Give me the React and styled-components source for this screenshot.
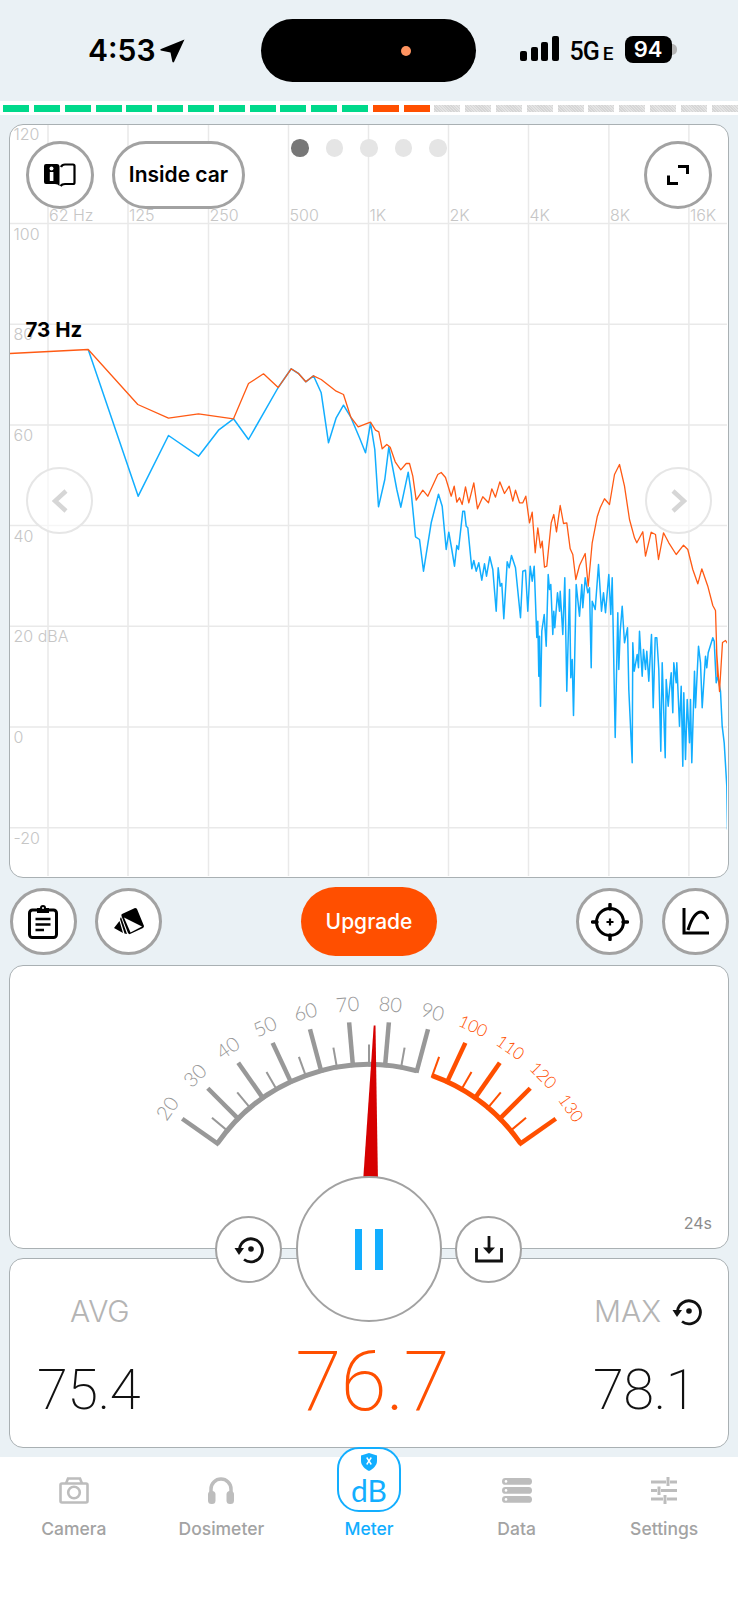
import React from 'react';
import styled, { createGlobalStyle } from 'styled-components';

const ORANGE = '#ff4f00';
const BLUE = '#12aeff';
const RING = '#a2a2a2';

const GlobalStyle = createGlobalStyle`
  html, body {
    margin: 0;
    padding: 0;
    background: #eaf1f5;
  }
  * {
    box-sizing: border-box;
  }
`;

const Screen = styled.div`
  position: relative;
  width: 738px;
  height: 1600px;
  overflow: hidden;
  display: flex;
  flex-direction: column;
  background: #eaf1f5;
  font-family: Inter, "Liberation Sans", sans-serif;
`;

/* status bar */
const StatusBar = styled.div`
  height: 101px;
  display: flex;
  flex-shrink: 0;
`;

const StatusLeft = styled.div`
  width: 261px;
  padding: 34px 0 0 88px;
  display: flex;
  align-items: flex-start;
  gap: 4px;
`;

const Clock = styled.span`
  font-size: 30px;
  line-height: 32px;
  font-weight: 600;
  color: #000;
`;

const Island = styled.div`
  width: 215px;
  height: 63px;
  margin-top: 19px;
  padding-left: 140px;
  border-radius: 32px;
  background: #000;
  display: flex;
  align-items: center;
`;

const IslandDot = styled.span`
  width: 10px;
  height: 10px;
  border-radius: 50%;
  background: #ff9460;
`;

const StatusRight = styled.div`
  padding: 36px 0 0 44px;
  display: flex;
  align-items: flex-start;
`;

const Signal = styled.div`
  display: flex;
  align-items: flex-end;
  gap: 3.5px;
  height: 25px;
  margin-right: 11px;
`;

const SignalBar = styled.span`
  width: 7px;
  height: ${p => p.$h}px;
  border-radius: 2px;
  background: #000;
`;

const Network = styled.span`
  font-family: Roboto, Inter, sans-serif;
  font-size: 25px;
  line-height: 26px;
  font-weight: 500;
  letter-spacing: -1px;
  color: #000;
  margin: 3px 12px 0 0;
  width: 43px;
  white-space: nowrap;
  small {
    font-size: 19px;
    margin-left: 4px;
    letter-spacing: 0;
  }
`;

const Battery = styled.div`
  position: relative;
  width: 47px;
  height: 27px;
  border-radius: 8px;
  background: #000;
  color: #fff;
  font-size: 22px;
  line-height: 27px;
  font-weight: 600;
  text-align: center;
  &::after {
    content: "";
    position: absolute;
    left: 47px;
    top: 8px;
    width: 5px;
    height: 11px;
    border-radius: 0 5px 5px 0;
    background: #b4b4b4;
  }
`;

/* level strip */
const LevelStrip = styled.div`
  height: 14px;
  flex-shrink: 0;
  padding: 4px 0 0 3.3px;
  background: #fff;
  display: flex;
  gap: 4.8px;
  overflow: hidden;
`;

const LevelCell = styled.span`
  width: 26px;
  height: 6.5px;
  flex-shrink: 0;
  background: ${p => p.$color};
`;

/* cards */
const Card = styled.div`
  position: relative;
  width: 720px;
  height: ${p => p.$h}px;
  margin: ${p => p.$top}px 9px 0;
  flex-shrink: 0;
  border: 1.5px solid #a9b0b3;
  border-radius: 14px;
  background: #fff;
`;

const Drawing = styled.svg`
  display: block;
  border-radius: 12px;
`;

const AxisText = styled.text`
  font-family: Inter, sans-serif;
  font-size: 16px;
  font-weight: 300;
  fill: #c6c6c6;
`;

const ReadoutText = styled.text`
  font-family: Inter, sans-serif;
  font-size: 20.5px;
  font-weight: 700;
  fill: #000;
`;

const DialText = styled.text`
  font-family: Lato, Inter, sans-serif;
  font-size: ${p => (p.$hot ? 17 : 20)}px;
  font-weight: 300;
  fill: ${p => (p.$hot ? ORANGE : '#989898')};
  text-anchor: middle;
  dominant-baseline: central;
`;

const RoundButton = styled.button`
  width: ${p => p.$size || 68}px;
  height: ${p => p.$size || 68}px;
  padding: 0;
  flex-shrink: 0;
  border: ${p => p.$ring || 3}px solid ${RING};
  border-radius: 50%;
  background: #fff;
  display: flex;
  align-items: center;
  justify-content: center;
`;

const ChartTopBar = styled.div`
  position: absolute;
  left: 16px;
  right: 16px;
  top: 15.5px;
  display: flex;
  align-items: flex-start;
  gap: 18px;
`;

const PillButton = styled.button`
  width: 133px;
  height: 68px;
  padding: 0;
  border: 3px solid ${RING};
  border-radius: 34px;
  background: #fff;
  font-family: Inter, sans-serif;
  font-size: 21px;
  font-weight: 600;
  color: #000;
`;

const PageDots = styled.div`
  position: absolute;
  left: 281px;
  top: 14px;
  display: flex;
  gap: 17px;
`;

const PageDot = styled.span`
  width: 17.5px;
  height: 17.5px;
  border-radius: 50%;
  background: ${p => (p.$on ? '#777' : '#e5e5e5')};
`;

const Spacer = styled.div`
  flex: 1;
`;

const PagerRow = styled.div`
  position: absolute;
  left: 16px;
  right: 16px;
  top: 342px;
  display: flex;
  justify-content: space-between;
`;

const PagerButton = styled.button`
  width: 67px;
  height: 67px;
  padding: 0;
  border: 2px solid #e6e6e6;
  border-radius: 50%;
  background: rgba(255, 255, 255, 0.6);
  display: flex;
  align-items: center;
  justify-content: center;
`;

/* tool row */
const ToolRow = styled.div`
  height: 87px;
  flex-shrink: 0;
  padding: 0 9.5px;
  display: grid;
  grid-template-columns: 1fr auto 1fr;
  align-items: center;
`;

const ToolGroup = styled.div`
  display: flex;
  gap: 18.5px;
  justify-content: ${p => (p.$end ? 'flex-end' : 'flex-start')};
`;

const UpgradeButton = styled.button`
  width: 136px;
  height: 69px;
  border: none;
  border-radius: 35px;
  background: ${ORANGE};
  color: #fff;
  font-family: Inter, sans-serif;
  font-size: 21px;
  font-weight: 500;
`;

/* meter */
const Elapsed = styled.span`
  position: absolute;
  right: 16px;
  top: 247px;
  font-size: 16px;
  line-height: 20px;
  color: #8c8c8c;
`;

const ControlCluster = styled.div`
  position: absolute;
  left: 205px;
  top: 210px;
  z-index: 2;
  display: flex;
  align-items: center;
  gap: 13.5px;
`;

const PauseBars = styled.span`
  display: flex;
  gap: 13px;
  span {
    width: 7.5px;
    height: 41px;
    background: ${BLUE};
  }
`;

/* stats */
const StatsGrid = styled.div`
  height: 100%;
  padding: 0 26px 0 27px;
  display: grid;
  grid-template-columns: 1fr auto 1fr;
  align-items: end;
`;

const StatColumn = styled.div`
  display: flex;
  flex-direction: column;
  align-items: ${p => (p.$right ? 'flex-end' : 'flex-start')};
`;

const StatLabel = styled.div`
  display: flex;
  align-items: center;
  gap: 11px;
  height: 30px;
  margin: 0 0 36px ${p => (p.$right ? 0 : 33)}px;
  font-family: Inter, sans-serif;
  font-size: 30px;
  font-weight: 300;
  color: #b4b4b4;
`;

const StatValue = styled.div`
  font-family: Roboto, sans-serif;
  font-size: ${p => (p.$big ? 84 : 56)}px;
  line-height: ${p => (p.$big ? 84 : 56)}px;
  font-weight: ${p => (p.$big ? 200 : 200)};
  letter-spacing: ${p => (p.$big ? -1 : -0.5)}px;
  color: ${p => (p.$big ? ORANGE : '#111')};
  margin: 0 ${p => (p.$right ? 6 : 0)}px ${p => (p.$big ? 23 : 29)}px ${p => (p.$big ? 5 : 0)}px;
`;

/* tab bar */
const TabBar = styled.div`
  margin-top: 9px;
  flex: 1;
  background: #fff;
  display: grid;
  grid-template-columns: repeat(5, 1fr);
`;

const TabItem = styled.div`
  padding-top: 19px;
  display: flex;
  flex-direction: column;
  align-items: center;
`;

const TabIconSlot = styled.div`
  position: relative;
  width: 64px;
  height: 28px;
  display: flex;
  align-items: center;
  justify-content: center;
`;

const TabLabel = styled.span`
  margin-top: 15px;
  font-size: 17.5px;
  line-height: 20px;
  font-weight: 500;
  color: ${p => (p.$active ? BLUE : '#a3a3a3')};
`;

const MeterTile = styled.div`
  position: absolute;
  left: 0;
  top: -29px;
  width: 64px;
  height: 65px;
  padding-top: 4px;
  border: 2.5px solid ${BLUE};
  border-radius: 22px;
  background: #fff;
  display: flex;
  flex-direction: column;
  align-items: center;
`;

const TileText = styled.span`
  margin-top: 5px;
  font-family: Lato, Inter, sans-serif;
  font-size: 30px;
  line-height: 28px;
  font-weight: 400;
  color: ${BLUE};
`;

/* data */
const HATCH = 'repeating-linear-gradient(45deg, #d6d6d6 0 1px, #e4e4e4 1px 2px)';

const levelCells = Array.from({ length: 24 }, (_, i) => {
  if (i < 12) return '#00d98b';
  if (i < 14) return ORANGE;
  return HATCH;
});

const freqLabels = ['62 Hz', '125', '250', '500', '1K', '2K', '4K', '8K', '16K'];
const gridX = [48.5, 128.5, 209, 289, 369, 449, 529, 609.4, 689.4];
const gridY = [
  [224, '100'],
  [324.7, '80'],
  [425.4, '60'],
  [526, '40'],
  [626.8, '20 dBA'],
  [727.5, '0'],
  [828.3, '-20'],
];

const orangeLine = `10,354 88.7,350 138.3,405 169,418.7 199,414.3 234,419.3 249,384 264,374.3 278.7,388 291.7,369.3
299,374 306.3,382.3 314,376.3 321.7,380 336.7,391.7 344,395 351.3,417.7 358.7,427.3 368.3,423.7 371,422.7 376,430.7
379.3,432.3 382.7,449.3 387.3,445 390.7,447.7 395.7,462.3 401.3,470.3 406.7,464 410,464 413.3,476.7 416.7,500.7
423.3,490.7 428.3,496.7 438.3,475 441.7,473 446,478 451.7,496.7 454.7,486.7 457.3,502.7 460,498.3 462.7,505 466,487.3
469.3,503.3 474.3,483.3 478,509.3 483.3,497.3 489,503.3 492.3,489.3 496,497.7 500.3,482.3 505,494 509.7,486.7
513.3,501.7 516,490.7 520,503.3 523.3,503.3 526.3,496.7 530,523.3 532.7,512.7 535.7,553.3 538.3,528.3 541,548.3
542.7,541.7 545,567.7 547.3,566.7 551.7,523.3 554.3,515 557,532.3 560.7,506 564,524 567.3,523.3 570.7,549.3 573.3,555
576.3,580 580,566 585.7,554 588.7,586.7 592.7,543.3 597.7,517.3 600.7,508.3 605,499.3 610,505 615,475 620,465 625,486.7
630,520 635,538.3 637.3,543.3 643.3,532.3 646,556.7 651.7,532.7 656,535 659,560 664,533.3 669.3,543.3 676.7,555
684,545.7 688.3,550 693.3,570 698.3,584.3 702.3,569.3 708.3,586.7 713.3,606 716,611 718,677 717,650 720,692 723,643
726,641 728,644`;

const blueLine = `88.7,350 138.7,496.7 169,436 199,456.7 219,430.7 234,419.3 249,440 278.7,388 291.7,369.3 299,374 306.3,382.3
314,376.3 321.7,393.3 329,443.3 336.7,418.3 344,405.7 351.3,417.7 360,438.3 366,453.3 371,423.3 375.3,450 379,507.3
385.3,480 389.3,447.7 397.3,490 401.3,507.7 408.7,472.7 411.7,493.3 416,537.3 420,540 424,571.7 431.7,523.3 439,494.7
442.7,506.7 446.7,550 449.3,532.7 452.3,550 455,566.7 457.3,546 459,550 463.3,511.7 465,511.7 466.7,526.7 468.3,528.3
472.3,569.3 474.3,561 476.7,571.7 479.3,563.3 482.3,580.7 485,564.3 487,576.7 490.3,557.3 493.3,570 496.7,611.7
498.7,568.3 500.7,586.7 502.3,584 504.3,619.3 507.7,562.3 509.7,568.3 512,556 516,568.3 521,618.3 523.3,571.7 526,570.7
528.3,611.7 530.7,566.7 532.7,581.7 534.7,566.7 537.3,638 538.3,621.7 539.3,676.7 540,636.7 541,706.7 542.3,631.7
544.7,615 546.7,646.7 548.7,575 550,590 551.3,585 553.3,635 554.3,611.7 555.3,628.3 558,593.3 560,611.7 560.7,591.7
563.3,635 565.3,578.3 567.3,691.7 570,590 571.3,678.3 572.7,660 574,716 576.7,585 580,616.7 582.3,585 583.3,608.3
585.7,578.3 588.3,593.3 590,588.3 591.7,668.3 592.7,601.7 595.7,610 599,565 602,611.7 604,593.3 606,613.3 609.3,575
611.3,615 612.7,578.3 615.7,738 618.3,613.3 619.3,670 620.7,631.7 622.7,606.7 625,643.3 628,628.3 629.3,690 632.7,763.3
633.3,643.3 634.7,671.7 637.7,655 639,668.3 640,631.7 642.7,676.7 644,650 646,670 647.3,651.7 649.3,681.7 652,635
653.7,708.3 655.7,638.3 657.3,638.3 659.3,670 661.3,751.7 662.7,663.3 665.7,758.3 666.7,680 668.7,706.7 670,690
671.7,673.3 673.3,713.3 674.3,663.3 676.7,683.3 677.3,663.3 680,726.7 681.7,686.7 683.3,766.7 684.3,693.3 686,760
687.7,700 690,743.3 691,700 692.3,763.3 695,671.7 696,708.3 699,646.7 701,663.3 702.7,708.3 706,656.7 707.3,668.3
708.7,653.3 713.3,638.3 714.7,641.7 716.7,683.3 718.3,676.7 721,691.7 722.7,726.7 724.7,743.3 727.3,786.7 728,830`;

/* dial geometry, in page coordinates */
const CX = 369.5;
const CY = 1250;
const polar = (r, deg) => {
  const a = (deg * Math.PI) / 180;
  return [CX + r * Math.sin(a), CY - r * Math.cos(a)];
};
const arcPath = (from, to, r) => {
  const [x1, y1] = polar(r, from);
  const [x2, y2] = polar(r, to);
  return `M${x1} ${y1} A${r} ${r} 0 0 1 ${x2} ${y2}`;
};
const dialMarks = [];
for (let v = 20; v <= 130; v += 5) dialMarks.push(v);

const Dial = () => (
  <Drawing width="717" height="281" viewBox="10.5 966.5 717 281">
    <path d={arcPath(-55, 15, 185)} fill="none" stroke="#989898" strokeWidth="5" />
    <path d={arcPath(20, 55, 185)} fill="none" stroke={ORANGE} strokeWidth="5" />
    {dialMarks.map(v => {
      const deg = v - 75;
      const major = v % 10 === 0;
      const hot = v > 90;
      const [x1, y1] = polar(183, deg);
      const [x2, y2] = polar(major ? 228 : 205, deg);
      return (
        <line
          key={v}
          x1={x1}
          y1={y1}
          x2={x2}
          y2={y2}
          stroke={hot ? ORANGE : '#989898'}
          strokeWidth={major ? 4.5 : 2}
        />
      );
    })}
    {dialMarks.filter(v => v % 10 === 0).map(v => {
      const deg = v - 75;
      const [x, y] = polar(247, deg);
      return (
        <DialText key={v} x={x} y={y} $hot={v > 90} transform={`rotate(${deg} ${x} ${y})`}>
          {v}
        </DialText>
      );
    })}
    <polygon points="374.2,1026 376,1026 378.6,1190 363,1190" fill="#d60000" />
  </Drawing>
);

const Chart = () => (
  <Drawing width="717" height="751" viewBox="10.5 125.5 717 751">
    {gridX.map(x => (
      <line key={x} x1={x} y1="124" x2={x} y2="878" stroke="#e9e9e9" strokeWidth="1.5" />
    ))}
    {gridY.map(([y]) => (
      <line key={y} x1="10" y1={y} x2="729" y2={y} stroke="#e9e9e9" strokeWidth="1.5" />
    ))}
    <AxisText x="14" y="140">120</AxisText>
    {gridY.map(([y, label]) => (
      <AxisText key={label} x="14" y={y + 16}>{label}</AxisText>
    ))}
    {freqLabels.map((label, i) => (
      <AxisText key={label} x={gridX[i] + 1} y="221.5">{label}</AxisText>
    ))}
    <polyline points={blueLine} fill="none" stroke={BLUE} strokeWidth="1.5" strokeLinejoin="round" />
    <polyline points={orangeLine} fill="none" stroke="#ff5a14" strokeWidth="1.3" strokeLinejoin="round" />
    <ReadoutText x="26" y="337">73 Hz</ReadoutText>
  </Drawing>
);

/* icons */
const LocationIcon = () => (
  <svg width="25" height="24" viewBox="0 0 25 24" style={{ marginTop: 5 }}>
    <path d="M24.5 .5 L14 23 Q13 24 12.3 22.5 L10.5 13.5 L.8 11.5 Q-.4 10.8 1 10 Z" fill="#000" />
  </svg>
);

const BookIcon = () => (
  <svg width="32" height="24" viewBox="0 0 32 24">
    <path d="M2 1 H13 Q15 1 15.5 3 V23 Q14 21 11 21 H2 Q0 21 0 19 V3 Q0 1 2 1 Z" fill="#000" />
    <path d="M17 4 Q18 1.5 21 1.5 H29 Q30.5 1.5 30.5 3 V19.5 Q30.5 21 29 21 H21 Q18 21 16.5 23" fill="none" stroke="#000" strokeWidth="2.2" />
    <circle cx="7.5" cy="5.5" r="2" fill="#fff" />
    <rect x="5.8" y="9" width="3.6" height="9" fill="#fff" />
  </svg>
);

const ExpandIcon = () => (
  <svg width="22" height="20" viewBox="0 0 22 20" fill="none" stroke="#000" strokeWidth="3">
    <path d="M11 1.5 H20.5 V9" />
    <path d="M1.5 10.5 V18.5 H11" />
  </svg>
);

const ChevronIcon = ({ left }) => (
  <svg width="16" height="24" viewBox="0 0 16 24" fill="none" stroke="#d6d6d6" strokeWidth="4.5">
    <path d={left ? 'M14 2 L3 12 L14 22' : 'M2 2 L13 12 L2 22'} />
  </svg>
);

const ClipboardIcon = () => (
  <svg width="30" height="34" viewBox="0 0 30 34">
    <rect x="1.5" y="5" width="27" height="27.5" rx="3" fill="none" stroke="#000" strokeWidth="3" />
    <rect x="9" y="3" width="12" height="5" fill="#000" />
    <circle cx="15" cy="3" r="3" fill="#000" />
    <circle cx="15" cy="3" r="1" fill="#fff" />
    <path d="M7.5 14 H22.5 M7.5 19.5 H22.5 M7.5 25 H16" stroke="#000" strokeWidth="2.4" />
  </svg>
);

const CardsIcon = () => (
  <svg width="30" height="27" viewBox="0 0 30 27">
    <path d="M8 6 L21 0 Q22.5 0 23 1 L30 18 Q30 19 29 20 L16 26 Q15 26.5 14 25 L7.5 8 Q7 6.5 8 6 Z" fill="#000" />
    <path d="M10 9.5 L28 18.5 L16.5 24.5 Z" fill="#fff" />
    <path d="M5.5 13 L9 25 L0 20 Z" fill="#000" />
    <path d="M7 9 L13 26 L10.5 25.5 L6 11 Z" fill="#000" />
  </svg>
);

const TargetIcon = () => (
  <svg width="38" height="38" viewBox="0 0 38 38" fill="none" stroke="#000">
    <circle cx="19" cy="19" r="13.5" strokeWidth="3" />
    <path d="M19 1.5 V6 M19 32 V36.5 M1.5 19 H6 M32 19 H36.5" strokeWidth="3.5" strokeLinecap="round" />
    <path d="M15.5 19 H22.5 M19 15.5 V22.5" strokeWidth="2.2" />
  </svg>
);

const CurveIcon = () => (
  <svg width="27" height="27" viewBox="0 0 27 27" fill="none" stroke="#000" strokeWidth="3">
    <path d="M2 0 V25 H27" />
    <path d="M6 22 C10 9 15 4 19 4 C22 4 24.5 7 26 11" />
  </svg>
);

const ResetIcon = () => (
  <svg width="30" height="30" viewBox="0 0 30 30">
    <path d="M5.5 15 A11.5 11.5 0 1 1 10 25.5" fill="none" stroke="#111" strokeWidth="2.8" />
    <path d="M.5 14 H10 L5 21 Z" fill="#111" />
    <circle cx="17" cy="15" r="2.8" fill="#111" />
  </svg>
);

const SaveIcon = () => (
  <svg width="28" height="27" viewBox="0 0 28 27" fill="none" stroke="#111" strokeWidth="2.8">
    <path d="M1.5 12 V25 H26.5 V12" />
    <path d="M14 0 V13" />
    <path d="M8 11.5 H20 L14 18 Z" fill="#111" stroke="none" />
  </svg>
);

const CameraIcon = () => (
  <svg width="30" height="27" viewBox="0 0 30 27" fill="none" stroke="#bdbdbd" strokeWidth="2.6">
    <rect x="1.5" y="6.5" width="27" height="19" rx="1.5" />
    <path d="M7 6.5 L9 1.5 H21 L23 6.5" />
    <circle cx="15" cy="15.5" r="5.8" />
  </svg>
);

const HeadphonesIcon = () => (
  <svg width="26" height="28" viewBox="0 0 26 28" fill="#bdbdbd">
    <path d="M3 18 V13 A10 10 0 0 1 23 13 V18" fill="none" stroke="#bdbdbd" strokeWidth="3.5" />
    <rect x="0" y="15" width="7.5" height="13" rx="3.5" />
    <rect x="18.5" y="15" width="7.5" height="13" rx="3.5" />
  </svg>
);

const DataIcon = () => (
  <svg width="30" height="25" viewBox="0 0 30 25">
    {[0, 9, 18].map(y => (
      <g key={y}>
        <rect x="0" y={y} width="30" height="6.8" rx="3.4" fill="#bdbdbd" />
        <circle cx="4" cy={y + 3.4} r="1.3" fill="#fff" />
      </g>
    ))}
  </svg>
);

const SlidersIcon = () => (
  <svg width="26" height="27" viewBox="0 0 26 27" fill="none" stroke="#bdbdbd" strokeWidth="3">
    <path d="M0 5 H15 M19 5 H26 M17 0 V9" />
    <path d="M0 13.5 H6 M10 13.5 H26 M8 9.5 V18" />
    <path d="M0 22 H12 M16 22 H26 M14 18 V27" />
  </svg>
);

const ShieldIcon = () => (
  <svg width="16" height="18" viewBox="0 0 16 18">
    <path d="M8 0 L16 2.5 V8 C16 12.5 12 16 8 18 C4 16 0 12.5 0 8 V2.5 Z" fill={BLUE} />
    <path d="M5.7 4.5 L10.3 11.5 M10.3 4.5 L5.7 11.5" stroke="#fff" strokeWidth="1.4" />
  </svg>
);

const tabs = [
  { label: 'Camera', Icon: CameraIcon },
  { label: 'Dosimeter', Icon: HeadphonesIcon },
  { label: 'Meter', active: true },
  { label: 'Data', Icon: DataIcon },
  { label: 'Settings', Icon: SlidersIcon },
];

const App = () => {
  return (
    <Screen>
      <GlobalStyle />
      <StatusBar>
        <StatusLeft>
          <Clock>4:53</Clock>
          <LocationIcon />
        </StatusLeft>
        <Island>
          <IslandDot />
        </Island>
        <StatusRight>
          <Signal>
            {[10, 14, 19, 25].map(h => <SignalBar key={h} $h={h} />)}
          </Signal>
          <Network>5G<small>E</small></Network>
          <Battery>94</Battery>
        </StatusRight>
      </StatusBar>

      <LevelStrip>
        {levelCells.map((color, i) => <LevelCell key={i} $color={color} />)}
      </LevelStrip>

      <Card $h={754} $top={9}>
        <Chart />
        <ChartTopBar>
          <RoundButton><BookIcon /></RoundButton>
          <PillButton>Inside car</PillButton>
          <Spacer />
          <RoundButton><ExpandIcon /></RoundButton>
        </ChartTopBar>
        <PageDots>
          {[0, 1, 2, 3, 4].map(i => <PageDot key={i} $on={i === 0} />)}
        </PageDots>
        <PagerRow>
          <PagerButton><ChevronIcon left /></PagerButton>
          <PagerButton><ChevronIcon /></PagerButton>
        </PagerRow>
      </Card>

      <ToolRow>
        <ToolGroup>
          <RoundButton $size={67}><ClipboardIcon /></RoundButton>
          <RoundButton $size={67}><CardsIcon /></RoundButton>
        </ToolGroup>
        <UpgradeButton>Upgrade</UpgradeButton>
        <ToolGroup $end>
          <RoundButton $size={67}><TargetIcon /></RoundButton>
          <RoundButton $size={67}><CurveIcon /></RoundButton>
        </ToolGroup>
      </ToolRow>

      <Card $h={284} $top={0}>
        <Dial />
        <Elapsed>24s</Elapsed>
        <ControlCluster>
          <RoundButton $ring={2} $size={67}><ResetIcon /></RoundButton>
          <RoundButton $ring={2} $size={146}>
            <PauseBars><span /><span /></PauseBars>
          </RoundButton>
          <RoundButton $ring={2} $size={67}><SaveIcon /></RoundButton>
        </ControlCluster>
      </Card>

      <Card $h={190} $top={9}>
        <StatsGrid>
          <StatColumn>
            <StatLabel>AVG</StatLabel>
            <StatValue>75.4</StatValue>
          </StatColumn>
          <StatValue $big>76.7</StatValue>
          <StatColumn $right>
            <StatLabel $right>MAX <ResetIcon /></StatLabel>
            <StatValue $right>78.1</StatValue>
          </StatColumn>
        </StatsGrid>
      </Card>

      <TabBar>
        {tabs.map(({ label, Icon, active }) => (
          <TabItem key={label}>
            <TabIconSlot>
              {active ? (
                <MeterTile>
                  <ShieldIcon />
                  <TileText>dB</TileText>
                </MeterTile>
              ) : (
                <Icon />
              )}
            </TabIconSlot>
            <TabLabel $active={active}>{label}</TabLabel>
          </TabItem>
        ))}
      </TabBar>
    </Screen>
  );
};

export default App;
